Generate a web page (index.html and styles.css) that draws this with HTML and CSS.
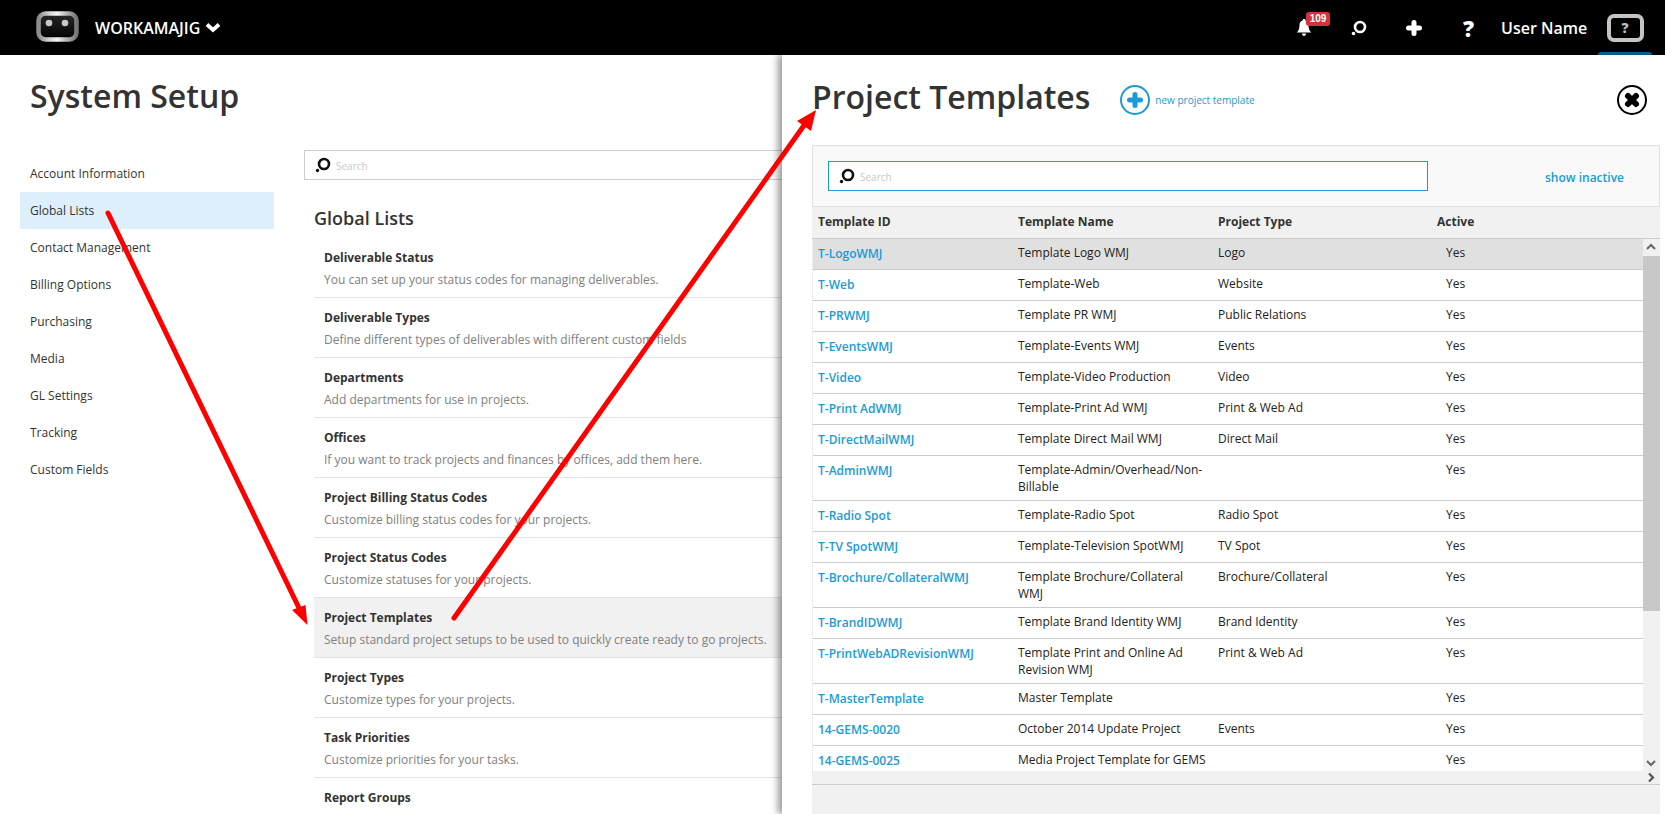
FILE: index.html
```html
<!DOCTYPE html>
<html lang="en">
<head>
<meta charset="utf-8">
<title>System Setup</title>
<link rel="stylesheet" href="styles.css">
</head>
<body>
<header class="topbar">
  <svg class="logo" width="43" height="31" viewBox="0 0 43 31">
    <defs>
      <linearGradient id="steel" x1="0" y1="0" x2="1" y2="0">
        <stop offset="0" stop-color="#8a8a8a"/><stop offset=".3" stop-color="#d8d8d8"/>
        <stop offset=".5" stop-color="#f4f4f4"/><stop offset=".75" stop-color="#b0b0b0"/><stop offset="1" stop-color="#777"/>
      </linearGradient>
      <linearGradient id="core" x1="0" y1="0" x2="0" y2="1">
        <stop offset="0" stop-color="#2a2a2a"/><stop offset="1" stop-color="#000"/>
      </linearGradient>
    </defs>
    <rect x="2.500" y="2.500" width="38" height="26" rx="7" fill="url(#core)" stroke="url(#steel)" stroke-width="4.500"/>
    <circle cx="13" cy="12" r="3.300" fill="#c8c8c8"/>
    <circle cx="29" cy="12" r="3.300" fill="#c8c8c8"/>
  </svg>
  <div class="brand">WORKAMAJIG
    <svg class="chev" width="16" height="11" viewBox="0 0 16 11"><path d="M2 2.500l6 5.500 6-5.500" fill="none" stroke="#fff" stroke-width="3.800"/></svg>
  </div>
  <nav class="top-actions">
    <div class="top-icon bell-wrap">
      <svg width="16" height="17" viewBox="0 0 16 17"><path d="M8 0c.9 0 1.500.6 1.500 1.400 2.200.6 3 2.600 3 4.600 0 3.600.9 5.800 2.800 7.600H.7C2.600 11.800 3.500 9.600 3.500 6c0-2 .8-4 3-4.600C6.500.6 7.100 0 8 0zM6 14.600h4c0 1.200-.9 2.400-2 2.400s-2-1.200-2-2.400z" fill="#fff"/></svg>
      <span class="badge">109</span>
    </div>
    <div class="top-icon">
      <svg width="16" height="16" viewBox="0 0 16 16"><circle cx="9" cy="7" r="5" fill="none" stroke="#fff" stroke-width="2.600"/><circle cx="2.500" cy="13.500" r="1.800" fill="#fff"/></svg>
    </div>
    <div class="top-icon">
      <svg width="16" height="16" viewBox="0 0 16 16"><path d="M8 2.500v11M2.500 8h11" stroke="#fff" stroke-width="5" stroke-linecap="round"/></svg>
    </div>
    <div class="top-icon help">?</div>
    <div class="user-name">User Name</div>
    <div class="user-btn">
      <svg width="37" height="28" viewBox="0 0 37 28"><rect x="2" y="2" width="33" height="24" rx="5" fill="#000" stroke="#c4c4c4" stroke-width="4"/></svg>
      <span class="user-q">?</span>
    </div>
  </nav>
</header>

<div class="workspace">
  <main class="setup">
    <h1 class="page-title">System Setup</h1>
    <div class="setup-cols">
      <ul class="side-nav">
        <li>Account Information</li>
        <li class="is-active">Global Lists</li>
        <li>Contact Management</li>
        <li>Billing Options</li>
        <li>Purchasing</li>
        <li>Media</li>
        <li>GL Settings</li>
        <li>Tracking</li>
        <li>Custom Fields</li>
      </ul>
      <section class="lists">
        <div class="search-box">
          <svg width="16" height="16" viewBox="0 0 16 16"><circle cx="9" cy="7" r="5" fill="none" stroke="#111" stroke-width="2.600"/><circle cx="2.500" cy="13.500" r="1.700" fill="#111"/></svg>
          <span class="placeholder">Search</span>
        </div>
        <h2 class="lists-title">Global Lists</h2>
        <div class="list-row"><h3>Deliverable Status</h3><p>You can set up your status codes for managing deliverables.</p></div>
        <div class="list-row"><h3>Deliverable Types</h3><p>Define different types of deliverables with different custom fields</p></div>
        <div class="list-row"><h3>Departments</h3><p>Add departments for use in projects.</p></div>
        <div class="list-row"><h3>Offices</h3><p>If you want to track projects and finances by offices, add them here.</p></div>
        <div class="list-row"><h3>Project Billing Status Codes</h3><p>Customize billing status codes for your projects.</p></div>
        <div class="list-row"><h3>Project Status Codes</h3><p>Customize statuses for your projects.</p></div>
        <div class="list-row is-hover"><h3>Project Templates</h3><p>Setup standard project setups to be used to quickly create ready to go projects.</p></div>
        <div class="list-row"><h3>Project Types</h3><p>Customize types for your projects.</p></div>
        <div class="list-row"><h3>Task Priorities</h3><p>Customize priorities for your tasks.</p></div>
        <div class="list-row"><h3>Report Groups</h3></div>
      </section>
    </div>
  </main>

  <aside class="panel">
    <div class="panel-head">
      <h1 class="panel-title">Project Templates</h1>
      <svg class="add-icon" width="30" height="30" viewBox="0 0 30 30"><circle cx="15" cy="15" r="14" fill="#fff" stroke="#1a9bd7" stroke-width="2"/><path d="M15 9.500v11M9.500 15h11" stroke="#1a9bd7" stroke-width="5" stroke-linecap="round"/></svg>
      <a class="add-link">new project template</a>
      <svg class="close-icon" width="30" height="30" viewBox="0 0 30 30"><circle cx="15" cy="15" r="14" fill="#fff" stroke="#000" stroke-width="2"/><path d="M11 11l8 8M19 11l-8 8" stroke="#000" stroke-width="6" stroke-linecap="round"/></svg>
    </div>
    <div class="toolbar">
      <div class="search-box search-focus">
        <svg width="16" height="16" viewBox="0 0 16 16"><circle cx="9" cy="7" r="5" fill="none" stroke="#111" stroke-width="2.600"/><circle cx="2.500" cy="13.500" r="1.700" fill="#111"/></svg>
        <span class="placeholder">Search</span>
      </div>
      <a class="toggle-link">show inactive</a>
    </div>
    <div class="grid-head">
      <div>Template ID</div><div>Template Name</div><div>Project Type</div><div>Active</div>
    </div>
    <div class="grid-wrap">
      <div class="grid-body">
        <div class="grid-row is-selected"><a>T-LogoWMJ</a><div>Template Logo WMJ</div><div>Logo</div><div class="yes">Yes</div></div>
        <div class="grid-row"><a>T-Web</a><div>Template-Web</div><div>Website</div><div class="yes">Yes</div></div>
        <div class="grid-row"><a>T-PRWMJ</a><div>Template PR WMJ</div><div>Public Relations</div><div class="yes">Yes</div></div>
        <div class="grid-row"><a>T-EventsWMJ</a><div>Template-Events WMJ</div><div>Events</div><div class="yes">Yes</div></div>
        <div class="grid-row"><a>T-Video</a><div>Template-Video Production</div><div>Video</div><div class="yes">Yes</div></div>
        <div class="grid-row"><a>T-Print AdWMJ</a><div>Template-Print Ad WMJ</div><div>Print &amp; Web Ad</div><div class="yes">Yes</div></div>
        <div class="grid-row"><a>T-DirectMailWMJ</a><div>Template Direct Mail WMJ</div><div>Direct Mail</div><div class="yes">Yes</div></div>
        <div class="grid-row"><a>T-AdminWMJ</a><div>Template-Admin/Overhead/Non-Billable</div><div></div><div class="yes">Yes</div></div>
        <div class="grid-row"><a>T-Radio Spot</a><div>Template-Radio Spot</div><div>Radio Spot</div><div class="yes">Yes</div></div>
        <div class="grid-row"><a>T-TV SpotWMJ</a><div>Template-Television SpotWMJ</div><div>TV Spot</div><div class="yes">Yes</div></div>
        <div class="grid-row"><a>T-Brochure/CollateralWMJ</a><div>Template Brochure/Collateral WMJ</div><div>Brochure/Collateral</div><div class="yes">Yes</div></div>
        <div class="grid-row"><a>T-BrandIDWMJ</a><div>Template Brand Identity WMJ</div><div>Brand Identity</div><div class="yes">Yes</div></div>
        <div class="grid-row"><a>T-PrintWebADRevisionWMJ</a><div>Template Print and Online Ad Revision WMJ</div><div>Print &amp; Web Ad</div><div class="yes">Yes</div></div>
        <div class="grid-row"><a>T-MasterTemplate</a><div>Master Template</div><div></div><div class="yes">Yes</div></div>
        <div class="grid-row"><a>14-GEMS-0020</a><div>October 2014 Update Project</div><div>Events</div><div class="yes">Yes</div></div>
        <div class="grid-row"><a>14-GEMS-0025</a><div>Media Project Template for GEMS</div><div></div><div class="yes">Yes</div></div>
      </div>
      <div class="vscroll">
        <svg class="sb-arrow" width="16" height="17" viewBox="0 0 16 17"><path d="M4 10l4-4 4 4" fill="none" stroke="#666" stroke-width="2"/></svg>
        <div class="sb-thumb"></div>
        <svg class="sb-arrow sb-end" width="16" height="17" viewBox="0 0 16 17"><path d="M4 7l4 4 4-4" fill="none" stroke="#666" stroke-width="2"/></svg>
      </div>
    </div>
    <div class="hscroll">
      <svg class="sb-right" width="16" height="13" viewBox="0 0 16 13"><path d="M6 2.500l4 4-4 4" fill="none" stroke="#555" stroke-width="2.200"/></svg>
    </div>
    <div class="panel-foot"></div>
  </aside>

  <svg class="annot" width="1665" height="814" viewBox="0 0 1665 814">
    <path d="M108 213L300 610" stroke="#f00" stroke-width="5" stroke-linecap="round" fill="none"/>
    <path d="M292 610l13.500-5 2 20z" fill="#f00"/>
    <path d="M454 618L805 124" stroke="#f00" stroke-width="5" stroke-linecap="round" fill="none"/>
    <path d="M797 121l14 10 5-21z" fill="#f00"/>
  </svg>
</div>
</body>
</html>
```
FILE: styles.css
```css
* { box-sizing: border-box; }
html, body { margin: 0; padding: 0; height: 100%; overflow: hidden; }
body {
  font-family: "Open Sans", "Liberation Sans", sans-serif;
  font-size: 12px;
  color: #333;
  background: #fff;
  display: flex;
  flex-direction: column;
}
h1, h2, h3, p, ul { margin: 0; padding: 0; }
a { color: #1a9bd7; }

.topbar {
  flex: 0 0 55px;
  background: #000;
  display: flex;
  align-items: center;
  padding-left: 36px;
  color: #fff;
}
.logo { margin-top: -2px; }
.brand {
  margin-left: 16px;
  font-size: 16px;
  font-weight: 600;
  display: flex;
  align-items: center;
  gap: 5px;
}
.top-actions {
  margin-left: auto;
  height: 100%;
  display: flex;
  align-items: center;
}
.top-icon {
  width: 55px;
  display: flex;
  justify-content: center;
  align-items: center;
  position: relative;
}
.badge {
  position: absolute;
  left: 30px;
  top: -7px;
  width: 24px;
  height: 14px;
  border-radius: 3px;
  background: #d1333f;
  color: #fff;
  font: bold 10px/14px "Liberation Sans", sans-serif;
  text-align: center;
}
.help { font-size: 22px; font-weight: 800; line-height: 24px; }
.user-name { margin-left: 5px; font-size: 16px; font-weight: 600; width: 97px; }
.user-btn {
  width: 54px;
  height: 100%;
  margin-right: 13px;
  display: flex;
  justify-content: center;
  align-items: center;
  position: relative;
}
.user-btn::after {
  content: "";
  position: absolute;
  left: 0;
  right: 0;
  bottom: 0;
  height: 3px;
  background: #0a6f9e;
  border-radius: 3px 3px 0 0;
}
.user-q {
  position: absolute;
  left: 0;
  right: 0;
  top: 18px;
  text-align: center;
  font: 800 14px/19px "Open Sans", sans-serif;
  color: #bdbdbd;
}

.workspace {
  flex: 1;
  display: flex;
  min-height: 0;
  position: relative;
}
.setup { flex: 0 0 782px; width: 782px; overflow: hidden; }
.page-title {
  height: 95px;
  padding: 19px 0 0 30px;
  font-size: 32px;
  line-height: 44px;
  font-weight: 600;
  color: #333;
}
.setup-cols { display: flex; }
.side-nav {
  flex: 0 0 254px;
  margin: 5px 0 0 20px;
  list-style: none;
}
.side-nav li {
  height: 37px;
  line-height: 38px;
  padding-left: 10px;
  font-size: 12px;
}
.side-nav .is-active { background: #ddeffa; }
.lists { flex: 0 0 520px; margin-left: 30px; }
.search-box {
  height: 30px;
  border: 1px solid #ccc;
  display: flex;
  align-items: center;
  padding-left: 10px;
  background: #fff;
}
.placeholder { font-size: 10px; color: #c8c8c8; margin: 1px 0 0 5px; }
.lists-title {
  margin: 26px 0 8px 10px;
  font-size: 18px;
  line-height: 24px;
  font-weight: 600;
}
.list-row {
  margin-left: 10px;
  height: 60px;
  padding: 10px 10px 0;
  border-bottom: 1px solid #e2e2e2;
}
.list-row h3 { font-size: 12px; line-height: 20px; font-weight: 700; color: #333; }
.list-row p { margin-top: 3px; font-size: 12px; line-height: 18px; color: #808080; white-space: nowrap; }
.list-row.is-hover { background: #f1f1f1; }

.panel {
  flex: 1;
  background: #fff;
  box-shadow: -4px 0 7px rgba(0, 0, 0, .4);
  padding: 0 5px 0 30px;
  display: flex;
  flex-direction: column;
  z-index: 1;
  min-width: 0;
}
.panel-head {
  flex: 0 0 90px;
  display: flex;
  align-items: center;
  padding-right: 13px;
}
.panel-title {
  font-size: 32px;
  line-height: 44px;
  font-weight: 600;
  margin-top: -6px;
}
.add-icon { margin-left: 30px; }
.add-link { margin-left: 5px; font-size: 10px; }
.close-icon { margin-left: auto; }
.toolbar {
  flex: 0 0 61px;
  background: #f9f9f9;
  border: 1px solid #e0e0e0;
  padding: 15px 35px 15px 15px;
  display: flex;
  align-items: center;
  justify-content: space-between;
}
.search-focus { width: 600px; border-color: #1a9bd7; }
.toggle-link { font-size: 12px; font-weight: 600; margin-top: 2px; }
.grid-head {
  display: grid;
  grid-template-columns: 200px 200px 219px 1fr;
  flex: 0 0 32px;
  background: #f1f1f1;
  border-bottom: 1px solid #ccc;
  font-weight: 700;
  line-height: 30px;
}
.grid-head > div { padding-left: 6px; }
.grid-wrap { flex: 0 0 532px; display: flex; overflow: hidden; }
.grid-body { flex: 1; min-width: 0; border-left: 1px dotted #ddd; }
.grid-row {
  display: grid;
  grid-template-columns: 199px 200px 219px 1fr;
  min-height: 31px;
  border-bottom: 1px solid #ccc;
  line-height: 17px;
  color: #222;
}
.grid-row > * { padding: 5px 4px 5px 6px; }
.grid-row > a { padding: 6px 0 4px 5px; font-weight: 600; }
.grid-row > .yes { padding-left: 15px; }
.grid-row.is-selected { background: #e0e0e0; }
.vscroll {
  flex: 0 0 17px;
  background: #f1f1f1;
  display: flex;
  flex-direction: column;
}
.sb-arrow { display: block; flex: none; }
.sb-thumb { height: 355px; background: #c8c8c8; }
.sb-end { margin-top: auto; }
.hscroll {
  flex: 0 0 14px;
  background: #f1f1f1;
  border-bottom: 1px solid #ccc;
  display: flex;
  justify-content: flex-end;
  padding-right: 1px;
}
.sb-right { flex: none; }
.panel-foot { flex: 1; background: #f1f1f1; }

.annot {
  position: absolute;
  left: 0;
  top: -55px;
  z-index: 2;
  pointer-events: none;
}
```
